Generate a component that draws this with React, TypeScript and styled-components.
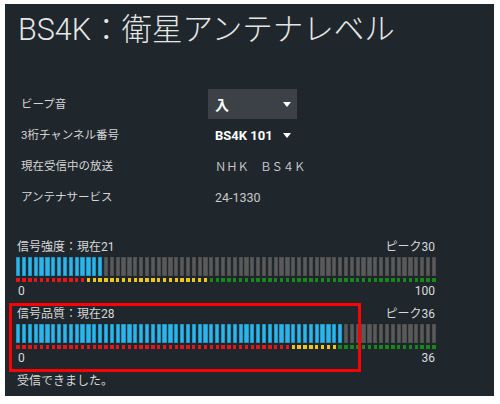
import React from "react";
import styled, { createGlobalStyle } from "styled-components";

const GlobalStyle = createGlobalStyle`
  html, body { margin: 0; padding: 0; background: #ffffff; }
  body { font-family: Roboto, "Noto Sans CJK JP", "Noto Sans", sans-serif; }
`;

const Page = styled.div`
  width: 500px;
  height: 404px;
  box-sizing: border-box;
  padding: 4px 0 0 5px;
  background: #ffffff;
`;

const Panel = styled.div`
  width: 489px;
  height: 392px;
  box-sizing: border-box;
  padding: 8px 0 0 11px;
  background: #1f262c;
  color: #d8d8d8;
  display: flex;
  flex-direction: column;
`;

const Title = styled.h1`
  margin: 0 0 0 2px;
  font-size: 30.5px;
  line-height: 36px;
  font-weight: 300;
  color: #e6e6e6;
  white-space: nowrap;
`;

const Settings = styled.div`
  margin: 41px 0 0 5px;
  display: flex;
  flex-direction: column;
`;

const Row = styled.div`
  display: grid;
  grid-template-columns: 187px 89px;
  height: 31px;
  align-items: start;
`;

const Label = styled.div`
  font-size: 11.5px;
  line-height: 30px;
  color: #d6d6d6;
`;

const Value = styled.div<{ $boxed?: boolean }>`
  height: 30px;
  box-sizing: border-box;
  padding: 0 6px 0 7px;
  display: flex;
  align-items: center;
  justify-content: space-between;
  background: ${(p) => (p.$boxed ? "#3b4146" : "transparent")};
`;

const BoldText = styled.span<{ $size: number }>`
  font-size: ${(p) => p.$size}px;
  font-weight: 700;
  color: #ffffff;
  white-space: nowrap;
`;

const PlainText = styled.span<{ $size: number; $spacing?: number }>`
  font-size: ${(p) => p.$size}px;
  letter-spacing: ${(p) => p.$spacing ?? 0}px;
  color: #c9c9c9;
  white-space: nowrap;
`;

const Caret = styled.span`
  width: 0;
  height: 0;
  border-left: 4px solid transparent;
  border-right: 4px solid transparent;
  border-top: 5px solid #ffffff;
`;

const MeterBlock = styled.div<{ $gap: number }>`
  position: relative;
  width: 420px;
  margin-top: ${(p) => p.$gap}px;
  display: flex;
  flex-direction: column;
`;

const MeterHead = styled.div`
  display: flex;
  justify-content: space-between;
  font-size: 12px;
  line-height: 14px;
  color: #d8d8d8;
  padding: 0 1px 0 1px;
`;

const Segments = styled.div`
  margin-top: 3px;
  display: grid;
  grid-template-columns: repeat(72, 1fr);
  column-gap: 1.6px;
`;

const Segment = styled.div`
  display: flex;
  flex-direction: column;
  align-items: center;
`;

const Bar = styled.div<{ $lit: boolean }>`
  width: 100%;
  height: 19px;
  background: ${(p) => (p.$lit ? "#2ab6ea" : "#5a5a5a")};
  box-shadow: inset 0 0 0 0.6px ${(p) => (p.$lit ? "#1b7fa8" : "#474747")};
`;

const zoneColor = { red: "#e5151c", yellow: "#f0c51c", green: "#17891a" };

const Dot = styled.div<{ $zone: "red" | "yellow" | "green" }>`
  margin-top: 2px;
  width: 80%;
  height: 4px;
  background: ${(p) => zoneColor[p.$zone]};
`;

const MeterFoot = styled.div`
  margin-top: 2px;
  display: flex;
  justify-content: space-between;
  font-size: 12px;
  line-height: 14px;
  color: #dcdcdc;
  padding: 0 1px 0 2px;
`;

const Highlight = styled.div`
  position: absolute;
  left: -7px;
  top: -4px;
  width: 352px;
  height: 69px;
  box-sizing: border-box;
  border: 3px solid #ff0000;
  pointer-events: none;
`;

const Status = styled.div`
  margin: 9px 0 0 1px;
  font-size: 12px;
  line-height: 14px;
  color: #d8d8d8;
`;

const TOTAL = 72;

type MeterProps = {
  label: string;
  peak: string;
  max: number;
  value: number;
  reds: number;
  yellows: number;
  gap: number;
  highlighted?: boolean;
};

function Meter({ label, peak, max, value, reds, yellows, gap, highlighted }: MeterProps) {
  const lit = Math.round((value / max) * TOTAL);
  const segs = Array.from({ length: TOTAL }, (_, i) => {
    const zone: "red" | "yellow" | "green" =
      i < reds ? "red" : i < reds + yellows ? "yellow" : "green";
    return (
      <Segment key={i}>
        <Bar $lit={i < lit} />
        <Dot $zone={zone} />
      </Segment>
    );
  });
  return (
    <MeterBlock $gap={gap}>
      <MeterHead>
        <span>{label}</span>
        <span>{peak}</span>
      </MeterHead>
      <Segments>{segs}</Segments>
      <MeterFoot>
        <span>0</span>
        <span>{max}</span>
      </MeterFoot>
      {highlighted && <Highlight />}
    </MeterBlock>
  );
}

export default function App() {
  return (
    <>
      <GlobalStyle />
      <Page>
        <Panel>
          <Title>BS4K：衛星アンテナレベル</Title>
          <Settings>
            <Row>
              <Label>ビープ音</Label>
              <Value $boxed>
                <BoldText $size={14}>入</BoldText>
                <Caret />
              </Value>
            </Row>
            <Row>
              <Label>3桁チャンネル番号</Label>
              <Value>
                <BoldText $size={13}>BS4K 101</BoldText>
                <Caret />
              </Value>
            </Row>
            <Row>
              <Label>現在受信中の放送</Label>
              <Value>
                <PlainText $size={11.3}>ＮＨＫ　ＢＳ４Ｋ</PlainText>
              </Value>
            </Row>
            <Row>
              <Label>アンテナサービス</Label>
              <Value>
                <PlainText $size={12.5}>24-1330</PlainText>
              </Value>
            </Row>
          </Settings>
          <Meter label="信号強度：現在21" peak="ピーク30" max={100} value={21} reds={12} yellows={21} gap={27} />
          <Meter label="信号品質：現在28" peak="ピーク36" max={36} value={28} reds={47} yellows={8} gap={9} highlighted />
          <Status>受信できました。</Status>
        </Panel>
      </Page>
    </>
  );
}
